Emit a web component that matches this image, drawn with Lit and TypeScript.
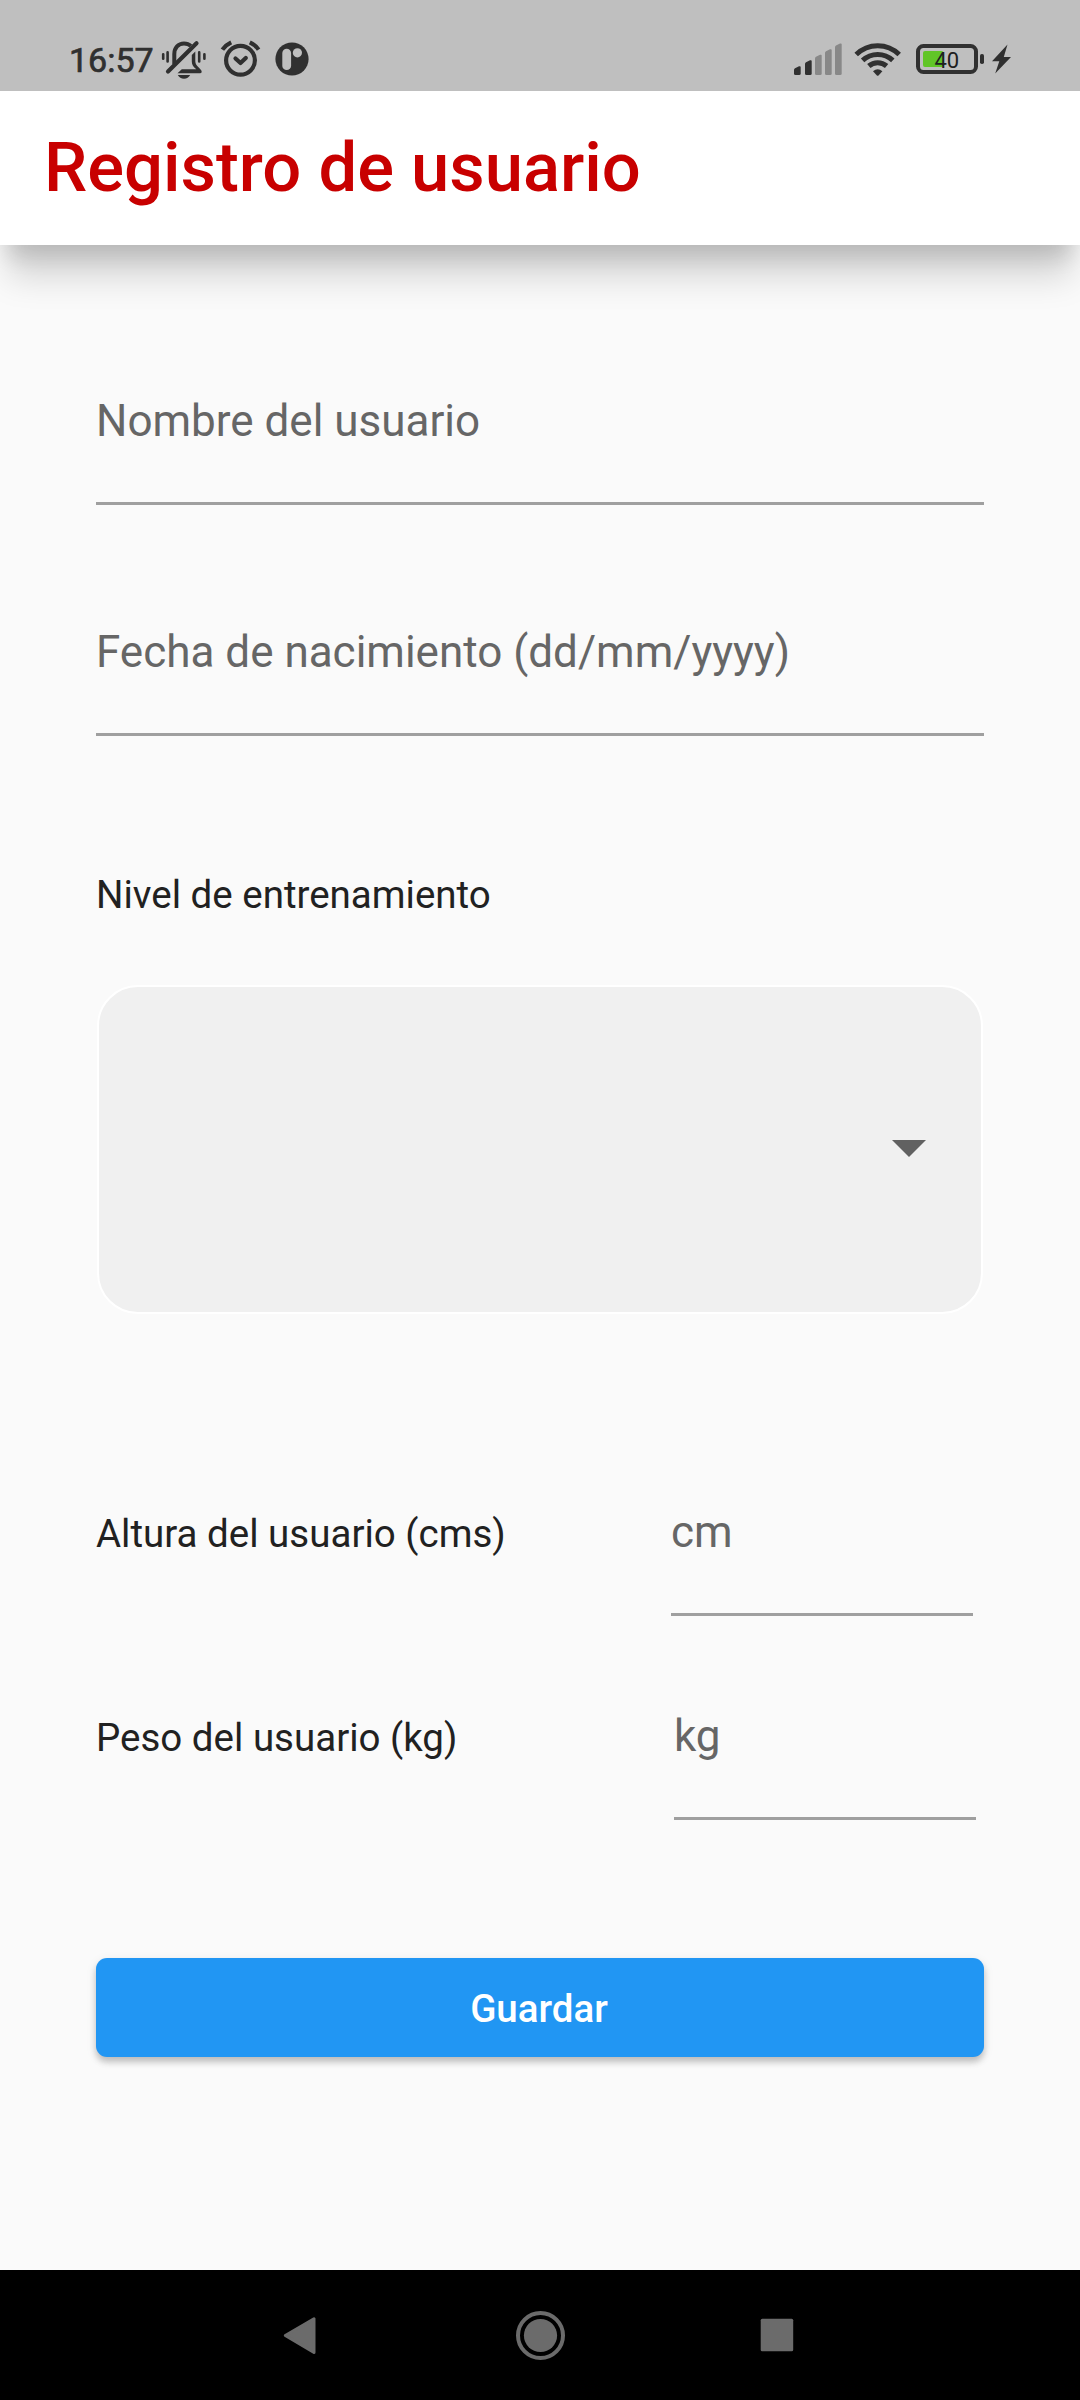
import { LitElement, html, css, svg } from "lit";
import { customElement, property } from "lit/decorators.js";

@customElement("status-bar")
class StatusBar extends LitElement {
  static styles = css`
    :host { display: block; }
    .bar { display: flex; height: 91px; background: #bfbfbf; padding: 38px 66px 0 69px; box-sizing: border-box; color: #303030; justify-content: space-between; }
    .group { display: flex; height: 42px; }
    .time { width: 91px; font: 400 34px/42px Roboto, sans-serif; -webkit-text-stroke: .7px #303030; padding-top: 1px; box-sizing: border-box; white-space: nowrap; }
    svg { display: block; height: 42px; overflow: visible; }
    .gap { margin-left: 12px; }
    .num { font: 400 22px Roboto, sans-serif; }
  `;
  render() {
    const bars = [[794, 67], [805, 61], [815, 55.5], [825, 50], [835, 44.3]];
    return html`<div class="bar">
      <div class="group">
        <span class="time">16:57</span>
        <svg viewBox="160 38 48 42" width="48" fill="none" stroke="#303030" stroke-linecap="round">
          <path stroke-width="2.6" d="M163.2 54.2v4.6M167.6 52.4v9M199.2 52.4v9M204.4 54.2v4.6" />
          <path stroke-width="4" stroke-linecap="butt" d="M174.3 64V54c0-6 4-10.600 9.700-10.600 2.700 0 5 .8 6.800 2.500" />
          <path stroke-width="4.200" d="M196.500 43.300L168 71.500" />
          <path fill="#303030" stroke="none" d="M195.300 51.500l-3.500 3.600v6.300c0 3.500 1.500 5.500 4.500 7.800h-14.500l-4.300 4h22.500c1.800 0 2.200-2 1-3.300-4.300-4.500-5.700-5.500-5.700-9.400z" />
          <path fill="#303030" stroke="none" d="M177.800 75h12.400c-1.200 2.400-3.500 3.700-6.200 3.700s-5-1.300-6.200-3.700z" />
        </svg>
        <svg class="gap" viewBox="220 38 42 42" width="42" fill="none" stroke="#303030" stroke-width="4.200" stroke-linecap="round">
          <circle cx="240.500" cy="60.300" r="14.400" />
          <path d="M235.500 58.500l5 4.500 5.300-5" stroke-linejoin="round" />
          <path stroke-linecap="butt" stroke-width="4.200" d="M222.400 49.600q3.300-4.600 8.800-7.200M258.600 49.600q-3.300-4.600-8.800-7.200" />
        </svg>
        <svg class="gap" viewBox="274 38 36 42" width="36">
          <circle cx="292" cy="59" r="16.600" fill="#303030" />
          <rect x="282.300" y="48.700" width="8.800" height="21.400" rx="4.400" fill="#bfbfbf" />
          <circle cx="297.400" cy="52.800" r="4.600" fill="#bfbfbf" />
        </svg>
      </div>
      <div class="group">
        <svg viewBox="792 38 52 42" width="52">
          ${bars.map(([x, y], i) => svg`<path fill=${i < 2 ? "#303030" : "#888888"} d="M${x} ${y + 3}q0-1.200 1-1.700l4-2q1.700-.6 1.700 1V73.500q0 1.500-1.500 1.500h-3.700q-1.500 0-1.500-1.500z" />`)}
        </svg>
        <svg viewBox="844 38 68 42" width="68" fill="none" stroke="#303030" stroke-width="5">
          <path d="M856.200 54.500A30.500 30.500 0 0 1 899.200 54.500M862.600 60.400A22 22 0 0 1 892.800 60.400M868.800 66A13.500 13.500 0 0 1 886.600 66" />
          <path fill="#303030" stroke="none" d="M873 71.200q4.700-3.900 9.400 0l-3.900 4.200q-.8.700-1.600 0z" />
        </svg>
        <svg viewBox="912 38 76 42" width="76">
          <rect x="923" y="51" width="20.500" height="16" rx="2" fill="#61c527" />
          <rect x="918" y="46" width="58" height="26" rx="5.500" fill="none" stroke="#303030" stroke-width="4" />
          <rect x="980" y="54" width="4" height="10" rx="1.800" fill="#303030" />
          <text class="num" x="934.500" y="67.800" fill="#202020">40</text>
        </svg>
        <svg viewBox="988 38 26 42" width="26">
          <path fill="#303030" d="M1007.500 44.500L992 61.300h7.300L995.200 73.500 1011 57h-7.200z" />
        </svg>
      </div>
    </div>`;
  }
}

@customElement("line-field")
class LineField extends LitElement {
  @property() label = "";
  static styles = css`
    :host { display: block; }
    .field { padding-bottom: 55px; border-bottom: 3px solid #9f9f9f; font: 400 44px/52px Roboto, sans-serif; color: #666666; white-space: nowrap; }
  `;
  render() {
    return html`<div class="field">${this.label}</div>`;
  }
}

@customElement("nav-bar")
class NavBar extends LitElement {
  static styles = css`
    :host { display: block; }
    .nav { display: flex; height: 130px; background: #000; justify-content: center; gap: 187px; align-items: center; }
    svg { display: block; }
  `;
  render() {
    return html`<div class="nav">
      <svg width="50" height="50" viewBox="278 2310 50 50"><path fill="#6b6b6b" stroke="#6b6b6b" stroke-width="3" stroke-linejoin="round" d="M285.300 2335.500L314 2318.700v33.800z" /></svg>
      <svg width="50" height="50" viewBox="515 2310 50 50"><circle cx="540.500" cy="2335.500" r="22.500" fill="none" stroke="#6b6b6b" stroke-width="4" /><circle cx="540.500" cy="2335.500" r="16.600" fill="#6b6b6b" /></svg>
      <svg width="50" height="50" viewBox="752 2310 50 50"><rect x="760.700" y="2318.700" width="32.500" height="32.500" rx="1.500" fill="#6b6b6b" /></svg>
    </div>`;
  }
}

@customElement("app-root")
class AppRoot extends LitElement {
  static styles = css`
    :host { display: block; }
    .screen { display: flex; flex-direction: column; width: 1080px; height: 2400px; background: #fafafa; font-family: Roboto, sans-serif; overflow: hidden; }
    .appbar { height: 154px; flex: none; box-sizing: border-box; padding: 37px 44px 0; background: #fff; color: #c80000; font-weight: 500; font-size: 68.75px; line-height: 80px; white-space: nowrap;
      box-shadow: 0 18px 20px -8px rgba(0, 0, 0, .14), 0 40px 32px -8px rgba(0, 0, 0, .15); }
    .bar { z-index: 1; flex: none; }
    .form { flex: 1; padding: 150px 96px 0; }
    .second { margin-top: 121px; }
    .label { font-size: 38.5px; line-height: 45px; color: #212121; white-space: nowrap; }
    .level { margin-top: 136px; }
    .select { display: flex; justify-content: flex-end; align-items: center; margin: 68px 1px 0; height: 329px; box-sizing: border-box; padding: 0 55px 3px 0; border: 2px solid #fff; border-radius: 41px; background: #f0f0f0; }
    .arrow { display: block; }
    .row { display: flex; align-items: baseline; justify-content: space-between; }
    .height { margin-top: 192px; padding-right: 11px; }
    .weight { margin-top: 94px; padding-right: 8px; }
    .unit { width: 302px; }
    .save { display: flex; width: 100%; height: 99px; margin: 138px 0 0; padding: 2px 2px 0 0; box-sizing: border-box; border: 0; border-radius: 11px; background: #2196f3; color: #fff; font: 500 38.5px/45px Roboto, sans-serif; align-items: center; justify-content: center;
      box-shadow: 0 5px 6px rgba(0, 0, 0, .2), 0 3px 12px rgba(0, 0, 0, .08); }
  `;
  render() {
    return html`<div class="screen">
      <status-bar class="bar"></status-bar>
      <div class="appbar">Registro de usuario</div>
      <div class="form">
        <line-field label="Nombre del usuario"></line-field>
        <line-field class="second" label="Fecha de nacimiento (dd/mm/yyyy)"></line-field>
        <div class="label level">Nivel de entrenamiento</div>
        <div class="select"><svg class="arrow" width="34" height="17" viewBox="0 0 34 17"><path fill="#616161" d="M0 0h34L17 17z" /></svg></div>
        <div class="row height"><span class="label">Altura del usuario (cms)</span><line-field class="unit" label="cm"></line-field></div>
        <div class="row weight"><span class="label">Peso del usuario (kg)</span><line-field class="unit" label="kg"></line-field></div>
        <button class="save">Guardar</button>
      </div>
      <nav-bar></nav-bar>
    </div>`;
  }
}
